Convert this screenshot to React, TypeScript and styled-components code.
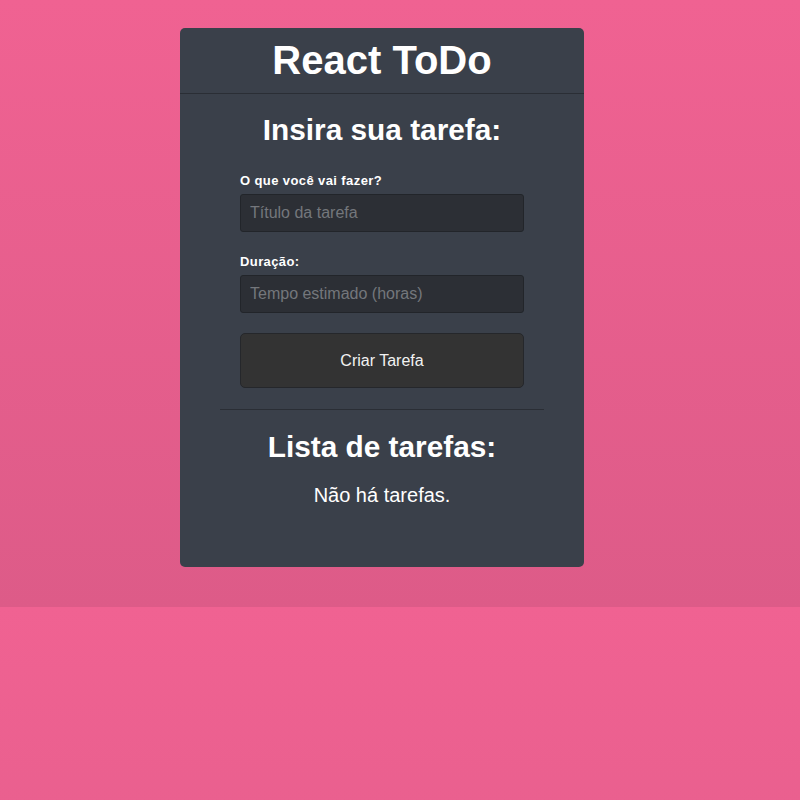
import styled, { createGlobalStyle } from "styled-components";

const GlobalStyle = createGlobalStyle`
  body {
    margin: 0;
    padding: 28px 0 40px;
    font-family: "Liberation Sans", Arial, sans-serif;
    background: linear-gradient(180deg, #f06292 0%, #dd5b88 100%);
  }
`;

const Card = styled.div`
  width: 404px;
  margin-left: 180px;
  background-color: #3a404a;
  border-radius: 5px;
  color: #fff;
  padding-bottom: 60px;
`;

const Header = styled.header`
  padding: 10px 0;
  border-bottom: 1px solid #2a2e35;
  text-align: center;
  h1 {
    margin: 0;
    font-size: 40px;
    font-weight: bold;
  }
`;

const Section = styled.section<{ $top: number }>`
  margin: 0 40px;
  padding-top: ${(p) => p.$top}px;
  text-align: center;
`;

const Title = styled.h2`
  margin: 0;
  font-size: 29.8px;
  font-weight: bold;
`;

const Form = styled.form`
  display: flex;
  flex-direction: column;
  margin: 26px 20px 0;
  text-align: left;
`;

const Label = styled.label<{ $top?: number }>`
  font-size: 13px;
  font-weight: bold;
  letter-spacing: 0.4px;
  margin-top: ${(p) => p.$top ?? 0}px;
  margin-bottom: 6px;
`;

const Input = styled.input`
  box-sizing: border-box;
  height: 38px;
  padding: 0 9px;
  font-family: "Liberation Sans", Arial, sans-serif;
  font-size: 16px;
  color: #ddd;
  background-color: #2c2f35;
  border: 1px solid #22252a;
  border-radius: 3px;
  outline: none;
  &::placeholder {
    color: #74777c;
  }
`;

const Button = styled.button`
  box-sizing: border-box;
  height: 55px;
  margin-top: 20px;
  font-family: "Liberation Sans", Arial, sans-serif;
  font-size: 16px;
  color: #f2f2f2;
  background-color: #333333;
  border: 1px solid #25272b;
  border-radius: 5px;
`;

const Divider = styled.hr`
  margin: 21px 0 0;
  border: none;
  border-top: 1px solid #2a2e35;
`;

const Empty = styled.p`
  margin: 20px 0 0;
  font-size: 20px;
`;

export default function App() {
  return (
    <>
      <GlobalStyle />
      <Card>
        <Header>
          <h1>React ToDo</h1>
        </Header>
        <Section $top={19}>
          <Title>Insira sua tarefa:</Title>
          <Form onSubmit={(e) => e.preventDefault()}>
            <Label>O que você vai fazer?</Label>
            <Input placeholder="Título da tarefa" />
            <Label $top={22}>Duração:</Label>
            <Input placeholder="Tempo estimado (horas)" />
            <Button type="submit">Criar Tarefa</Button>
          </Form>
          <Divider />
        </Section>
        <Section $top={20}>
          <Title>Lista de tarefas:</Title>
          <Empty>Não há tarefas.</Empty>
        </Section>
      </Card>
    </>
  );
}
